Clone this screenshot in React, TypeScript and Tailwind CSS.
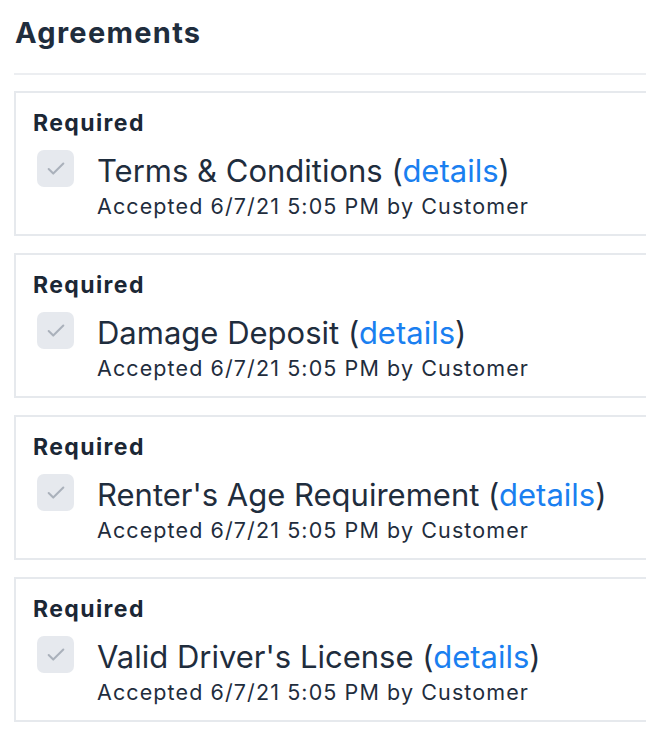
import { Check } from 'lucide-react';

const agreements = [
  'Terms & Conditions',
  'Damage Deposit',
  "Renter's Age Requirement",
  "Valid Driver's License",
];

function AgreementCard({ title }: { title: string }) {
  return (
    <div className="h-[145px] border-2 border-[#e6e9ed] pl-[17px] pt-[16px]">
      <div className="text-[23px] font-bold leading-[28px] tracking-[1.4px] text-[#1b2735]">Required</div>
      <div className="mt-[13px] flex items-start">
        <div className="ml-[4px] flex h-[37px] w-[37px] shrink-0 items-center justify-center rounded-[7px] bg-[#e6e9ee]">
          <Check className="h-[22px] w-[22px] text-[#aab1bb]" strokeWidth={2.2} />
        </div>
        <div className="ml-[23px] mt-[2px]">
          <div className="text-[31px] leading-[38px] text-[#1f2d3d]">
            {title} (<span className="text-[#1a7ff0]">details</span>)
          </div>
          <div className="mt-[3px] text-[21.5px] leading-[26px] tracking-[1.1px] text-[#1f2d3d]">
            Accepted 6/7/21 5:05 PM by Customer
          </div>
        </div>
      </div>
    </div>
  );
}

export default function App() {
  return (
    <div
      className="h-[738px] w-[646px] overflow-hidden bg-white"
      style={{ fontFamily: 'Inter, "Noto Sans", sans-serif' }}
    >
      <div className="w-[700px] pl-[14px]">
        <h1 className="pl-[1px] pt-[14px] text-[29px] font-bold leading-[38px] tracking-[1.3px] text-[#1f2d3d]">Agreements</h1>
        <div className="mt-[21px] h-[2px] bg-[#eceef1]" />
        <div className="mt-[16px] flex flex-col gap-[17px]">
          {agreements.map(a => (
            <AgreementCard key={a} title={a} />
          ))}
        </div>
      </div>
    </div>
  );
}
